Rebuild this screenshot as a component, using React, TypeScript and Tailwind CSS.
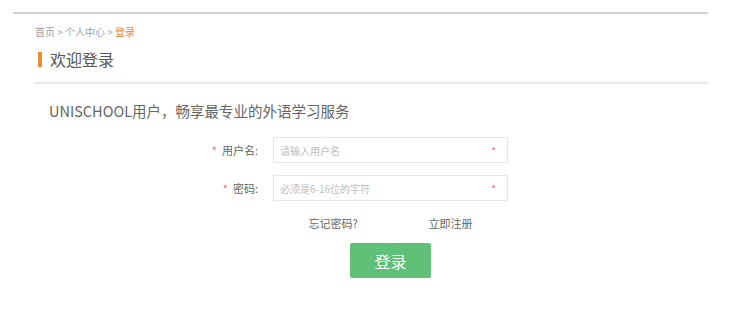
import React from 'react';

const font = { fontFamily: '"Noto Sans CJK SC", "Noto Sans", sans-serif' };

function Field({ label, placeholder, type }: { label: string; placeholder: string; type: string }) {
  return (
    <div className="flex items-center">
      <div className="w-[223px] text-right text-[11px] leading-[16px] text-[#666]">
        <span className="text-[#ee6a78] mr-[5px]">*</span>
        {label}:
      </div>
      <div className="ml-[15px] w-[235px] h-[26px] border border-[#e6e6e6] flex items-center px-[6px]">
        <input
          type={type}
          placeholder={placeholder}
          className="flex-1 min-w-0 bg-transparent outline-none text-[10px] text-[#555] placeholder:text-[#bdbdbd]"
        />
        <span className="text-[#ee6a78] text-[10px] mr-[5px]">*</span>
      </div>
    </div>
  );
}

export default function App() {
  return (
    <div className="w-[729px] h-[312px] bg-white pt-[12px]" style={font}>
      <div className="ml-[13px] w-[695px] h-[2px] bg-[#cfcfcf]" />

      <div className="ml-[35px] w-[673px]">
        {/* breadcrumb */}
        <div className="mt-[11px] text-[10px] leading-[14px] text-[#a0a0a0]">
          首页 &gt; 个人中心 &gt; <span className="text-[#f0883a]">登录</span>
        </div>

        {/* title */}
        <div className="mt-[10px] h-[20px] flex items-center">
          <span className="ml-[3px] w-[4px] h-[15px] bg-[#f08a2c]" />
          <span className="ml-[8px] text-[16px] leading-[20px] text-[#555]">欢迎登录</span>
        </div>

        <div className="mt-[13px] h-[2px] bg-[#e8e8e8]" />

        <div className="mt-[17px] ml-[14px] text-[14.5px] leading-[20px] text-[#666]">
          UNISCHOOL用户，畅享最专业的外语学习服务
        </div>

        <div className="mt-[16px]">
          <Field label="用户名" placeholder="请输入用户名" type="text" />
          <div className="mt-[12px]">
            <Field label="密码" placeholder="必须是6-16位的字符" type="password" />
          </div>
        </div>

        <div className="ml-[238px] w-[235px]">
          <div className="mt-[14px] flex justify-around text-[11px] leading-[16px] text-[#666]">
            <a href="#">忘记密码?</a>
            <a href="#">立即注册</a>
          </div>
          <button className="mt-[12px] mx-auto block w-[81px] h-[35px] rounded-[2px] bg-[#5fc077] text-white text-[16px]">
            登录
          </button>
        </div>
      </div>
    </div>
  );
}
